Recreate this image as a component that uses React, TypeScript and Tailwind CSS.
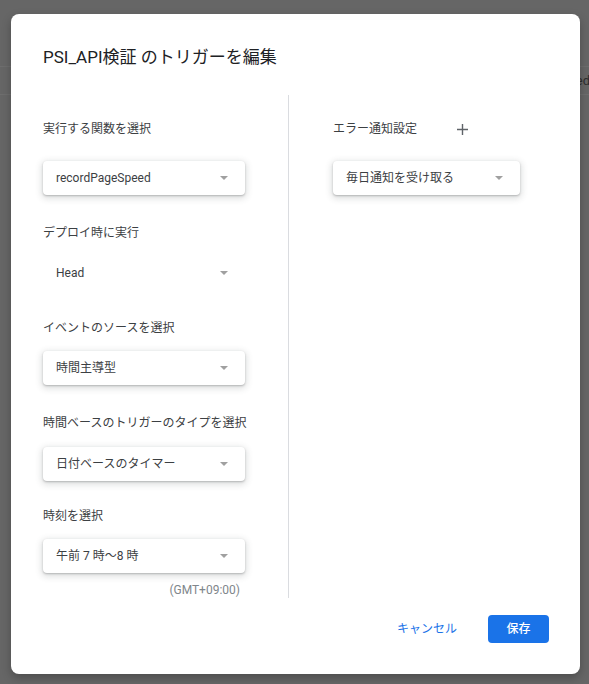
import React from "react";

const Arrow: React.FC = () => (
  <span className="h-0 w-0 border-l-[4px] border-r-[4px] border-t-[4px] border-l-transparent border-r-transparent border-t-[#a0a0a0]" />
);

const SelectBox: React.FC<{ value: string; width: string; flat?: boolean }> = ({ value, width, flat }) => (
  <div
    className={`${width} flex h-[34px] items-center justify-between rounded-[4px] bg-white pl-[13px] pr-[17px] text-[12px] text-[#3c4043] ${
      flat ? "" : "shadow-[0_1px_2px_rgba(60,64,67,0.3),0_2px_6px_2px_rgba(60,64,67,0.15)]"
    }`}
  >
    <span>{value}</span>
    <Arrow />
  </div>
);

const Label: React.FC<{ text: string; className?: string }> = ({ text, className }) => (
  <div className={`h-4 text-[12px] leading-4 text-[#3c4043] ${className ?? ""}`}>{text}</div>
);

export default function App() {
  return (
    <div className="relative h-[684px] w-[589px] overflow-hidden bg-[#666666] font-[Roboto,'Noto_Sans_CJK_JP',sans-serif]">
      {/* page behind the scrim */}
      <div className="pt-[66px]">
        <div className="flex h-[29px] items-center justify-end border-y border-[#6e6e6e] pr-0 text-[13px] text-[#2e2e2e]">
          <span className="-mr-[1px]">recordPageSpeed</span>
        </div>
      </div>

      {/* dialog */}
      <div className="absolute left-[11px] top-[14px] w-[569px] rounded-[8px] bg-white pl-[32px] pr-[31px] pb-[31px] pt-[31px] shadow-[0_4px_10px_rgba(0,0,0,0.25)]">
        <h1 className="h-6 text-[17px] leading-6 text-[#202124]">PSI_API検証 のトリガーを編集</h1>

        <div className="mt-[26px] flex">
          {/* left column */}
          <div className="w-[246px] border-r border-[#dadce0]">
            <Label text="実行する関数を選択" className="mt-[26px]" />
            <div className="mt-[24px]">
              <SelectBox value="recordPageSpeed" width="w-[202px]" />
            </div>

            <Label text="デプロイ時に実行" className="mt-[30px]" />
            <div className="mt-[15px]">
              <SelectBox value="Head" width="w-[202px]" flat />
            </div>

            <Label text="イベントのソースを選択" className="mt-[30px]" />
            <div className="mt-[15px]">
              <SelectBox value="時間主導型" width="w-[202px]" />
            </div>

            <Label text="時間ベースのトリガーのタイプを選択" className="mt-[30px]" />
            <div className="mt-[16px]">
              <SelectBox value="日付ベースのタイマー" width="w-[202px]" />
            </div>

            <Label text="時刻を選択" className="mt-[27px]" />
            <div className="mt-[15px]">
              <SelectBox value="午前 7 時～8 時" width="w-[202px]" />
            </div>
            <div className="mt-[9px] flex w-[197px] justify-end text-[12px] leading-4 text-[#80868b]">(GMT+09:00)</div>
          </div>

          {/* right column */}
          <div className="pl-[44px]">
            <div className="mt-[26px] flex h-4 items-center">
              <span className="text-[12px] leading-4 text-[#3c4043]">エラー通知設定</span>
              <svg className="ml-[40px] mt-[1px]" width="11" height="11" viewBox="0 0 11 11">
                <path d="M5.5 0v11M0 5.5h11" stroke="#5f6368" strokeWidth="1.4" />
              </svg>
            </div>
            <div className="mt-[24px]">
              <SelectBox value="毎日通知を受け取る" width="w-[187px]" />
            </div>
          </div>
        </div>

        {/* footer */}
        <div className="mt-[17px] flex items-center justify-end">
          <button className="text-[12px] text-[#1a73e8]">キャンセル</button>
          <button className="ml-[31px] h-[28px] w-[61px] rounded-[4px] bg-[#1a73e8] text-[12px] font-medium text-white">
            保存
          </button>
        </div>
      </div>
    </div>
  );
}
